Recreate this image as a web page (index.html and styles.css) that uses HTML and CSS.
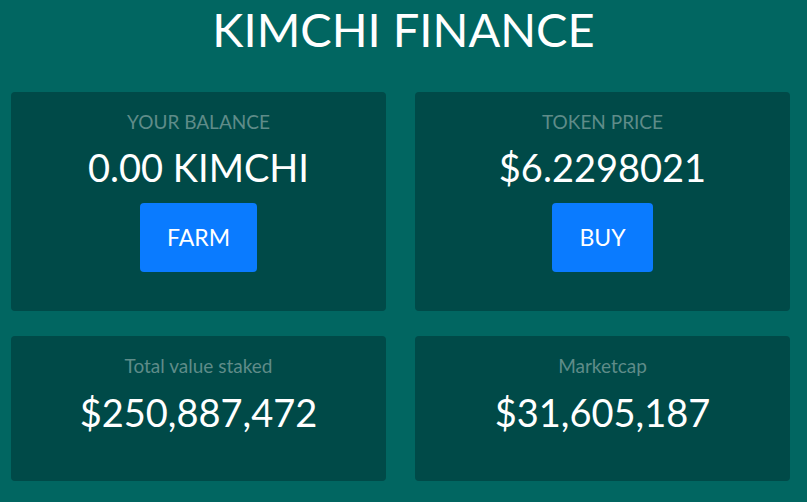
FILE: index.html
```html
<!DOCTYPE html>
<html lang="en">
<head>
<meta charset="utf-8">
<title>Kimchi Finance</title>
<link rel="stylesheet" href="styles.css">
</head>
<body>
<main class="page">
  <h1 class="title">KIMCHI FINANCE</h1>
  <section class="grid">
    <div class="card">
      <div class="label">YOUR BALANCE</div>
      <div class="value">0.00 KIMCHI</div>
      <a class="btn" href="#">FARM</a>
    </div>
    <div class="card">
      <div class="label">TOKEN PRICE</div>
      <div class="value">$6.2298021</div>
      <a class="btn" href="#">BUY</a>
    </div>
    <div class="card card-stat">
      <div class="label">Total value staked</div>
      <div class="value">$250,887,472</div>
    </div>
    <div class="card card-stat">
      <div class="label">Marketcap</div>
      <div class="value">$31,605,187</div>
    </div>
  </section>
</main>
</body>
</html>
```

FILE: styles.css
```css
html, body {
  margin: 0;
  padding: 0;
}
body {
  background: #016661;
  font-family: Lato, "Open Sans", sans-serif;
  color: #ffffff;
  height: 502px;
  overflow: hidden;
}
.page {
  padding: 0 11px;
}
.title {
  margin: 0;
  font-size: 47px;
  font-weight: 400;
  line-height: 58px;
  text-align: center;
}
.grid {
  margin-top: 34px;
  display: grid;
  grid-template-columns: 375px 375px;
  column-gap: 29px;
  row-gap: 25px;
}
.card {
  background: #004a48;
  border-radius: 4px;
  padding: 19px 10px 39px;
  display: flex;
  flex-direction: column;
  align-items: center;
}
.card-stat {
  padding-bottom: 45px;
}
.label {
  font-size: 19px;
  line-height: 1.2;
  font-weight: 400;
  color: #5f8c89;
}
.value {
  margin-top: 11px;
  font-size: 38px;
  line-height: 1.2;
  font-weight: 400;
}
.card-stat .value {
  margin-top: 12px;
}
.btn {
  margin-top: 13px;
  display: block;
  background: #0a7bff;
  color: #ffffff;
  text-decoration: none;
  border-radius: 4px;
  font-size: 23px;
  line-height: 69px;
  height: 69px;
  padding: 0 27px;
}
```
